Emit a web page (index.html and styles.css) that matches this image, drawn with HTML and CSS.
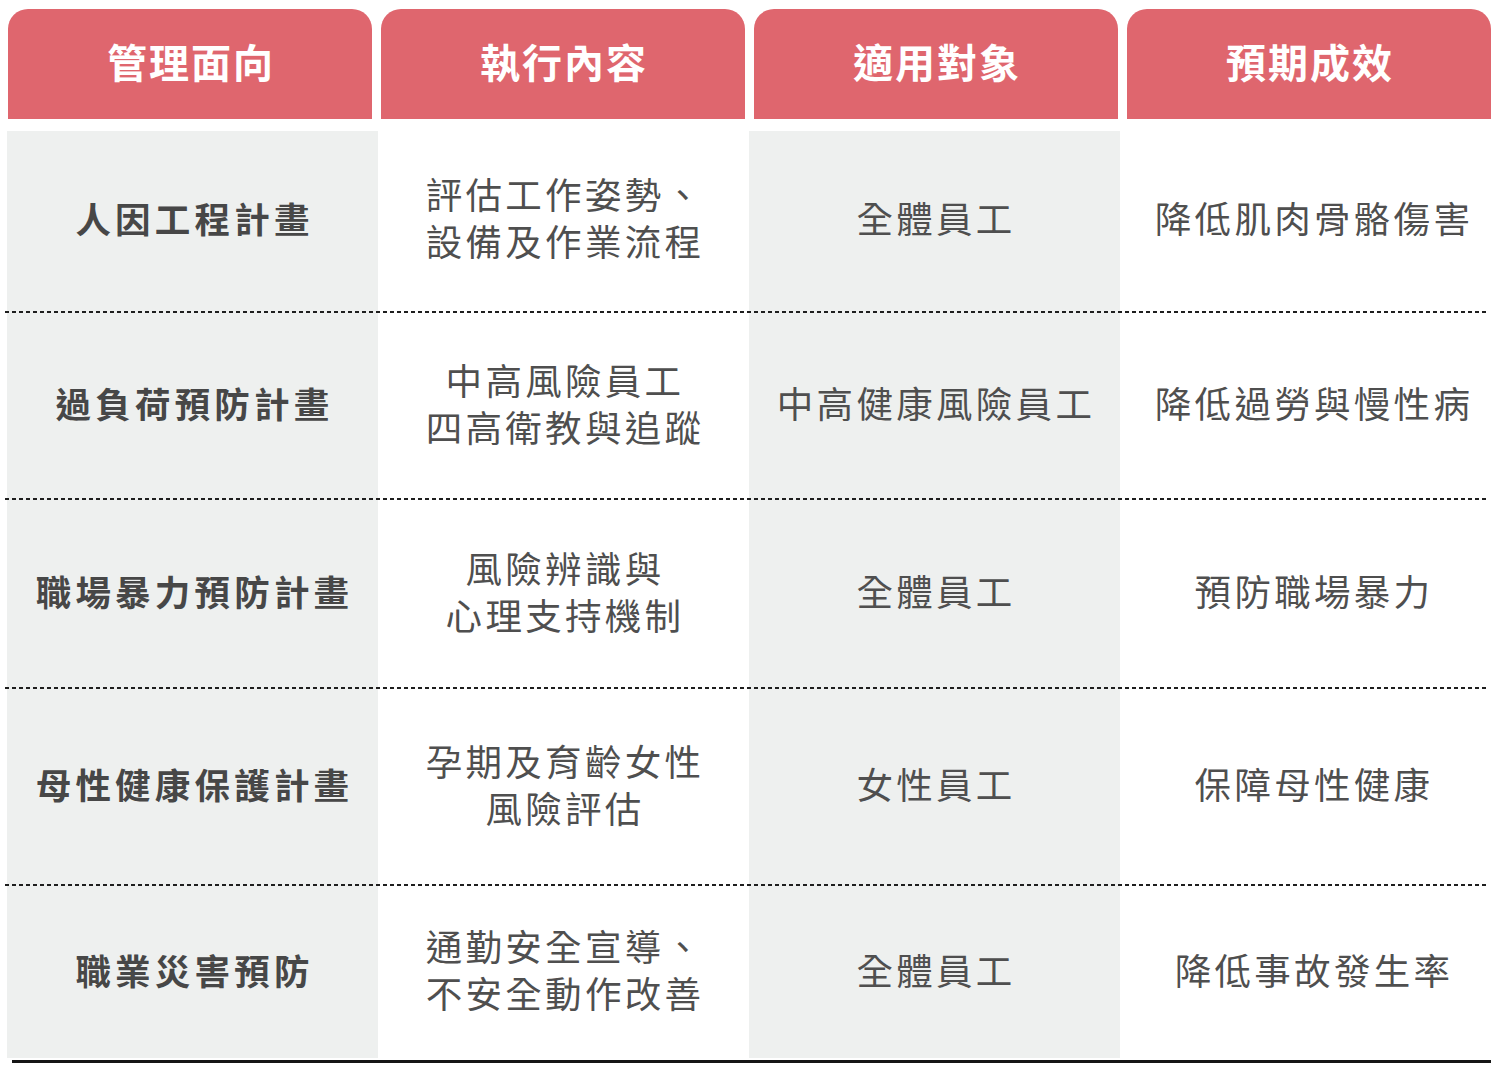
FILE: index.html
```html
<!DOCTYPE html>
<html lang="zh-Hant">
<head>
<meta charset="utf-8">
<title>職場健康管理</title>
<link rel="stylesheet" href="styles.css">
</head>
<body>
<div class="page">
  <div class="head">
    <div class="tab">管理面向</div>
    <div class="tab">執行內容</div>
    <div class="tab">適用對象</div>
    <div class="tab">預期成效</div>
  </div>
  <div class="table">
    <div class="row r1">
      <div class="cell name">人因工程計畫</div>
      <div class="cell"><div class="lines"><span class="ln">評估工作姿勢、</span><span class="ln">設備及作業流程</span></div></div>
      <div class="cell">全體員工</div>
      <div class="cell last">降低肌肉骨骼傷害</div>
    </div>
    <div class="sep"></div>
    <div class="row r2">
      <div class="cell name">過負荷預防計畫</div>
      <div class="cell"><div class="lines"><span class="ln">中高風險員工</span><span class="ln">四高衛教與追蹤</span></div></div>
      <div class="cell">中高健康風險員工</div>
      <div class="cell last">降低過勞與慢性病</div>
    </div>
    <div class="sep"></div>
    <div class="row r3">
      <div class="cell name">職場暴力預防計畫</div>
      <div class="cell"><div class="lines"><span class="ln">風險辨識與</span><span class="ln">心理支持機制</span></div></div>
      <div class="cell">全體員工</div>
      <div class="cell last">預防職場暴力</div>
    </div>
    <div class="sep"></div>
    <div class="row r4">
      <div class="cell name">母性健康保護計畫</div>
      <div class="cell"><div class="lines"><span class="ln">孕期及育齡女性</span><span class="ln">風險評估</span></div></div>
      <div class="cell">女性員工</div>
      <div class="cell last">保障母性健康</div>
    </div>
    <div class="sep"></div>
    <div class="row r5">
      <div class="cell name">職業災害預防</div>
      <div class="cell"><div class="lines"><span class="ln">通勤安全宣導、</span><span class="ln">不安全動作改善</span></div></div>
      <div class="cell">全體員工</div>
      <div class="cell last">降低事故發生率</div>
    </div>
  </div>
  <div class="bottom"></div>
</div>
</body>
</html>
```
FILE: styles.css
```css
html, body {
  margin: 0;
  padding: 0;
  background: #ffffff;
}
body {
  font-family: "Noto Sans CJK TC", "Noto Sans CJK SC", "Noto Sans", sans-serif;
  width: 1500px;
  height: 1070px;
  overflow: hidden;
}
.page {
  padding-top: 9px;
}
.head {
  display: grid;
  grid-template-columns: repeat(4, 364px);
  column-gap: 9px;
  margin-left: 8px;
  height: 110px;
}
.tab {
  background: #df666e;
  border-radius: 20px 20px 0 0;
  color: #ffffff;
  font-weight: 700;
  font-size: 40px;
  letter-spacing: 2px;
  padding-left: 2px;
  padding-bottom: 7px;
  box-sizing: border-box;
  display: flex;
  align-items: center;
  justify-content: center;
}
.table {
  margin-top: 12px;
  margin-left: 7px;
  width: 1484px;
  background: linear-gradient(to right,
    #eef0ef 0, #eef0ef 371px,
    #ffffff 371px, #ffffff 742px,
    #eef0ef 742px, #eef0ef 1113px,
    #ffffff 1113px, #ffffff 1484px);
}
.row {
  display: grid;
  grid-template-columns: repeat(4, 371px);
}
.r1 { height: 180px; }
.r2 { height: 185px; }
.r3 { height: 187px; }
.r4 { height: 195px; }
.r5 { height: 172px; }
.cell {
  display: flex;
  align-items: center;
  justify-content: center;
  text-align: center;
  box-sizing: border-box;
  color: #4f4f4f;
  font-size: 36.5px;
  font-weight: 400;
  letter-spacing: 3.3px;
  padding-left: 3px;
  padding-bottom: 6px;
  line-height: 47px;
}
.r1 .cell { padding-bottom: 8px; }
.lines {
  display: flex;
  flex-direction: column;
  align-items: center;
}
.ln {
  display: block;
  height: 47px;
  line-height: 47px;
  white-space: nowrap;
}
.cell.last {
  padding-left: 17px;
}
.cell.name {
  font-weight: 700;
  font-size: 35.5px;
  letter-spacing: 4.2px;
  padding-left: 4px;
  color: #474747;
}
.sep {
  height: 2px;
  margin-left: -2px;
  width: 1483px;
  background: repeating-linear-gradient(to right, #1e1e1e 0, #1e1e1e 4px, transparent 4px, transparent 7px);
}
.bottom {
  margin-top: 2px;
  margin-left: 12px;
  width: 1479px;
  height: 3px;
  background: #161616;
}
```
